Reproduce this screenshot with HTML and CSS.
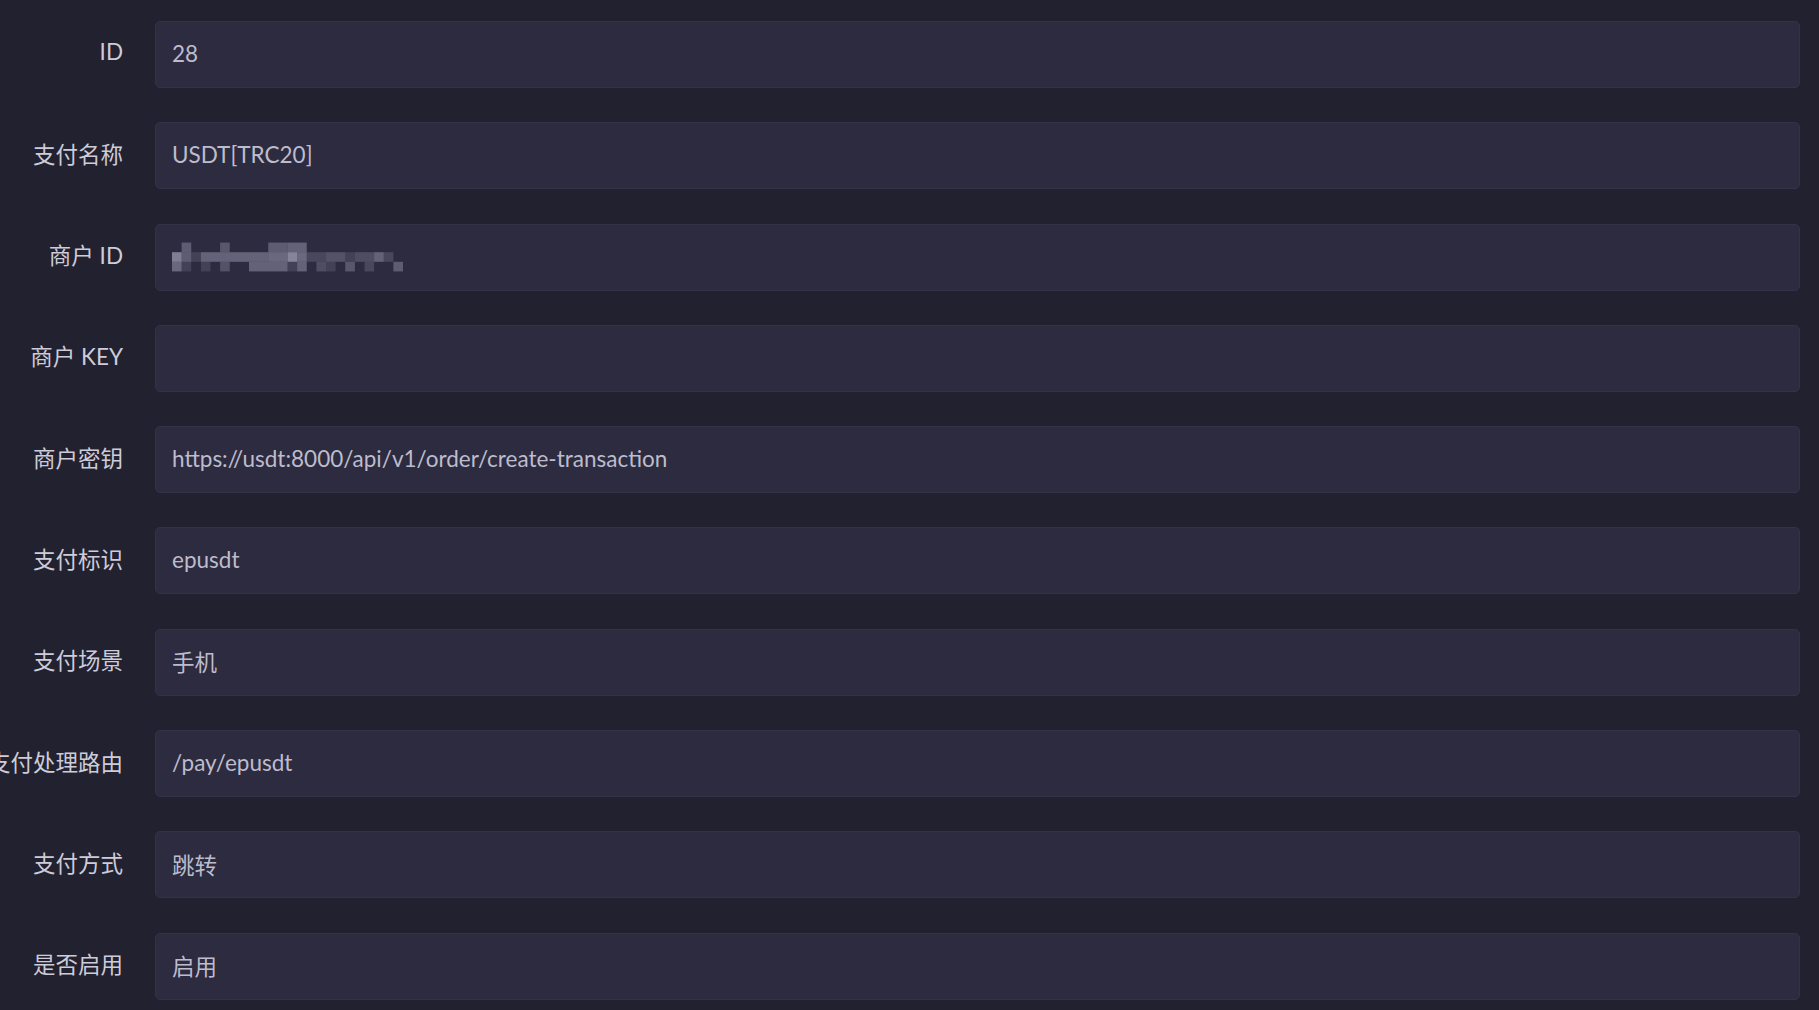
FILE: index.html
```html
<!DOCTYPE html>
<html lang="zh-CN">

<head>
    <meta charset="UTF-8">
    <meta name="viewport" content="width=device-width, initial-scale=1.0">
    <title>支付配置</title>
    <link rel="stylesheet" href="styles.css">
</head>

<body>
    <form class="pay-form">
        <div class="form-row">
            <label class="form-label">ID</label>
            <input class="form-input" type="text" value="28" readonly>
        </div>
        <div class="form-row">
            <label class="form-label">支付名称</label>
            <input class="form-input" type="text" value="USDT[TRC20]" readonly>
        </div>
        <div class="form-row">
            <label class="form-label">商户 ID</label>
            <div class="input-wrap">
                <input class="form-input" type="text" value="" readonly>
                <!-- 打码的商户号 -->
                <svg class="mosaic" width="231" height="30" viewBox="0 0 24 3">
                    <g fill="#9c9ab0">
                        <rect x="1" y="0" width="1" height="1" opacity="0.45" />
                        <rect x="5" y="0" width="1" height="1" opacity="0.4" />
                        <rect x="10" y="0" width="2" height="1" opacity="0.45" />
                        <rect x="12" y="0" width="2" height="1" opacity="0.5" />

                        <rect x="0" y="1" width="1" height="1" opacity="0.75" />
                        <rect x="1" y="1" width="1" height="1" opacity="0.45" />
                        <rect x="2" y="1" width="1" height="1" opacity="0.2" />
                        <rect x="3" y="1" width="7" height="1" opacity="0.5" />
                        <rect x="10" y="1" width="2" height="1" opacity="0.55" />
                        <rect x="12" y="1" width="1" height="1" opacity="0.8" />
                        <rect x="13" y="1" width="1" height="1" opacity="0.55" />
                        <rect x="14" y="1" width="2" height="1" opacity="0.25" />
                        <rect x="16" y="1" width="2" height="1" opacity="0.35" />
                        <rect x="18" y="1" width="1" height="1" opacity="0.2" />
                        <rect x="19" y="1" width="2" height="1" opacity="0.3" />
                        <rect x="21" y="1" width="1" height="1" opacity="0.5" />
                        <rect x="22" y="1" width="1" height="1" opacity="0.25" />

                        <rect x="0" y="2" width="1" height="1" opacity="0.55" />
                        <rect x="1" y="2" width="1" height="1" opacity="0.2" />
                        <rect x="3" y="2" width="1" height="1" opacity="0.2" />
                        <rect x="5" y="2" width="1" height="1" opacity="0.35" />
                        <rect x="8" y="2" width="4" height="1" opacity="0.5" />
                        <rect x="12" y="2" width="1" height="1" opacity="0.2" />
                        <rect x="13" y="2" width="1" height="1" opacity="0.5" />
                        <rect x="15" y="2" width="1" height="1" opacity="0.3" />
                        <rect x="16" y="2" width="1" height="1" opacity="0.2" />
                        <rect x="18" y="2" width="1" height="1" opacity="0.4" />
                        <rect x="20" y="2" width="1" height="1" opacity="0.25" />
                        <rect x="23" y="2" width="1" height="1" opacity="0.45" />
                    </g>
                </svg>
            </div>
        </div>
        <div class="form-row">
            <label class="form-label">商户 KEY</label>
            <input class="form-input" type="text" value="" readonly>
        </div>
        <div class="form-row">
            <label class="form-label">商户密钥</label>
            <input class="form-input" type="text" value="https://usdt:8000/api/v1/order/create-transaction" readonly>
        </div>
        <div class="form-row">
            <label class="form-label">支付标识</label>
            <input class="form-input" type="text" value="epusdt" readonly>
        </div>
        <div class="form-row">
            <label class="form-label">支付场景</label>
            <input class="form-input" type="text" value="手机" readonly>
        </div>
        <div class="form-row">
            <label class="form-label">支付处理路由</label>
            <input class="form-input" type="text" value="/pay/epusdt" readonly>
        </div>
        <div class="form-row">
            <label class="form-label">支付方式</label>
            <input class="form-input" type="text" value="跳转" readonly>
        </div>
        <div class="form-row">
            <label class="form-label">是否启用</label>
            <input class="form-input" type="text" value="启用" readonly>
        </div>
    </form>
</body>

</html>
```

FILE: styles.css
```css
body {
    margin: 0;
    background-color: #222130;
    font-family: "Lato", "Noto Sans CJK SC", sans-serif;
    overflow: hidden;
}

.pay-form {
    display: flex;
    flex-direction: column;
    gap: 34.3px;
    padding: 21px 19px 0 0;
}

.form-row {
    display: flex;
    align-items: center;
    gap: 32px;
    height: 67px;
}

/* 标签右对齐，太长时向左溢出 */
.form-label {
    flex: 0 0 123px;
    min-width: 0;
    display: flex;
    justify-content: flex-end;
    white-space: nowrap;
    font-size: 22.5px;
    color: #cdccd8;
    margin-top: -6px;
}

.input-wrap {
    position: relative;
    flex: 1;
    display: flex;
    height: 100%;
}

.form-input {
    flex: 1;
    min-width: 0;
    height: 100%;
    box-sizing: border-box;
    padding: 0 16px 2px;
    background-color: #2d2b40;
    border: 1px solid #343248;
    border-radius: 5px;
    font-family: inherit;
    font-size: 22.5px;
    color: #bdbccc;
    outline: none;
}

.mosaic {
    position: absolute;
    left: 17px;
    top: 18px;
}
```
